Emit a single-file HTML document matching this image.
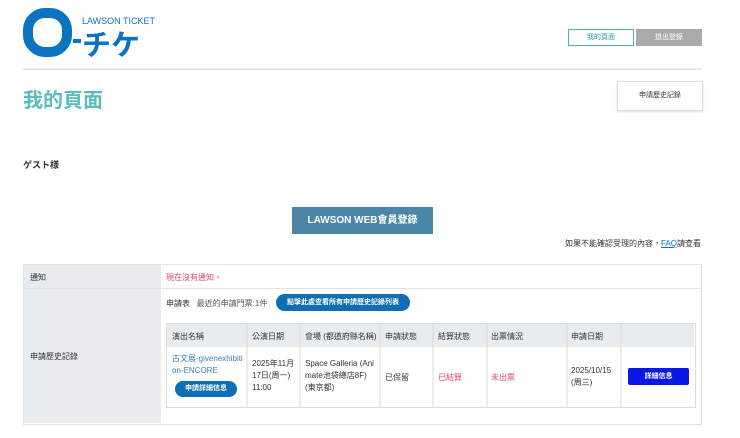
<!DOCTYPE html>
<html><head><meta charset="utf-8"><style>
body{margin:0;width:740px;height:438px;background:#fff;font-family:"Liberation Sans","Noto Sans CJK TC",sans-serif;position:relative;overflow:hidden;color:#333}
.a{position:absolute}
.f{font-size:8px}
</style></head><body>
<svg class="a" style="left:22px;top:6px" width="140" height="54">
<rect x="6" y="7" width="39" height="39" rx="17" fill="none" stroke="#0a74c0" stroke-width="10"/>
<rect x="51" y="33" width="8" height="4" fill="#0a74c0"/>
<text x="60" y="18" font-size="9" fill="#0a74c0" font-family="Liberation Sans">LAWSON TICKET</text>
<text x="60" y="49" font-size="29" fill="#0a74c0" font-family="Noto Sans CJK JP" font-weight="bold">チケ</text>
</svg>
<div class="a f" style="left:568px;top:29px;width:64px;height:15px;border:1px solid #4bb3b5;color:#2a9ea1;text-align:center;line-height:15px;font-size:7px">我的頁面</div>
<div class="a f" style="left:636px;top:29px;width:66px;height:17px;background:#aaa;color:#fff;text-align:center;line-height:17px;font-size:7px">退出登錄</div>
<div class="a" style="left:23px;top:68px;width:679px;height:2px;background:#e6e9ec"></div>
<div class="a" style="left:23px;top:84px;font-size:20px;font-weight:bold;color:#5bbcbe">我的頁面</div>
<div class="a" style="left:617px;top:81px;width:84px;height:28px;border:1px solid #ddd;box-shadow:0 1px 2px #ddd;text-align:center;line-height:28px;font-size:7px">申請歷史記錄</div>
<div class="a" style="left:23px;top:158px;font-size:9px;font-weight:bold">ゲスト様</div>
<div class="a" style="left:292px;top:207px;width:141px;height:27px;background:#4a86a8;color:#fff;text-align:center;line-height:27px;font-size:10px;font-weight:bold">LAWSON WEB會員登錄</div>
<div class="a f" style="right:39px;top:238px">如果不能確認受理的內容，<span style="color:#0a74c0;text-decoration:underline">FAQ</span>請查看</div>
<div class="a" style="left:23px;top:264px;width:677px;height:159px;border:1px solid #e2e2e2"></div>
<div class="a" style="left:24px;top:265px;width:137px;height:158px;background:#e9ecee"></div>
<div class="a" style="left:24px;top:288px;width:677px;height:1px;background:#e2e2e2"></div>
<div class="a f" style="left:30px;top:272px">通知</div>
<div class="a f" style="left:166px;top:272px;color:#e0457b">現在沒有通知。</div>
<div class="a f" style="left:30px;top:351px">申請歷史記錄</div>
<div class="a f" style="left:166px;top:298px">申請表 &nbsp;&nbsp;<span style="color:#555">最近的申請門票:1件</span></div>
<div class="a" style="left:276px;top:294px;width:134px;height:17px;border-radius:9px;background:#0e6fb5;color:#fff;font-size:7px;font-weight:bold;text-align:center;line-height:17px">點擊此處查看所有申請歷史記錄列表</div>
<div class="a" style="left:166px;top:323px;width:528px;height:83px;border:1px solid #ddd"></div>
<div class="a" style="left:167px;top:324px;width:527px;height:23px;background:#e9ecee"></div>
<div class="a f" style="top:331px;left:172px">演出名稱</div>
<div class="a f" style="top:331px;left:252px">公演日期</div>
<div class="a f" style="top:331px;left:305px">會場 (都道府縣名稱)</div>
<div class="a f" style="top:331px;left:385px">申請狀態</div>
<div class="a f" style="top:331px;left:438px">結算狀態</div>
<div class="a f" style="top:331px;left:491px">出票情況</div>
<div class="a f" style="top:331px;left:571px">申請日期</div>
<svg class="a" style="left:166px;top:323px" width="530" height="84"><g stroke="#ddd"><line x1="81" y1="0" x2="81" y2="84"/><line x1="134" y1="0" x2="134" y2="84"/><line x1="214" y1="0" x2="214" y2="84"/><line x1="267" y1="0" x2="267" y2="84"/><line x1="321" y1="0" x2="321" y2="84"/><line x1="401" y1="0" x2="401" y2="84"/><line x1="455" y1="0" x2="455" y2="84"/></g></svg>
<div class="a f" style="left:172px;top:353px;color:#3a7fc0;line-height:12px;width:72px">古文展-givenexhibiti<br>on-ENCORE</div>
<div class="a" style="left:175px;top:381px;width:62px;height:16px;border-radius:8px;background:#0e6fb5;color:#fff;font-size:7px;font-weight:bold;text-align:center;line-height:16px">申請詳細信息</div>
<div class="a f" style="left:252px;top:358px;line-height:12px">2025年11月<br>17日(周一)<br>11:00</div>
<div class="a f" style="left:305px;top:358px;line-height:12px">Space Galleria (Ani<br>mate池袋總店8F)<br>(東京都)</div>
<div class="a f" style="left:385px;top:372px">已保留</div>
<div class="a f" style="left:438px;top:372px;color:#e0457b">已結算</div>
<div class="a f" style="left:491px;top:372px;color:#e0457b">未出票</div>
<div class="a f" style="left:571px;top:365px;line-height:12px">2025/10/15<br>(周三)</div>
<div class="a" style="left:628px;top:368px;width:61px;height:17px;background:#0a18e6;border-radius:2px;color:#fff;font-size:7px;font-weight:bold;text-align:center;line-height:17px">詳細信息</div>
</body></html>
